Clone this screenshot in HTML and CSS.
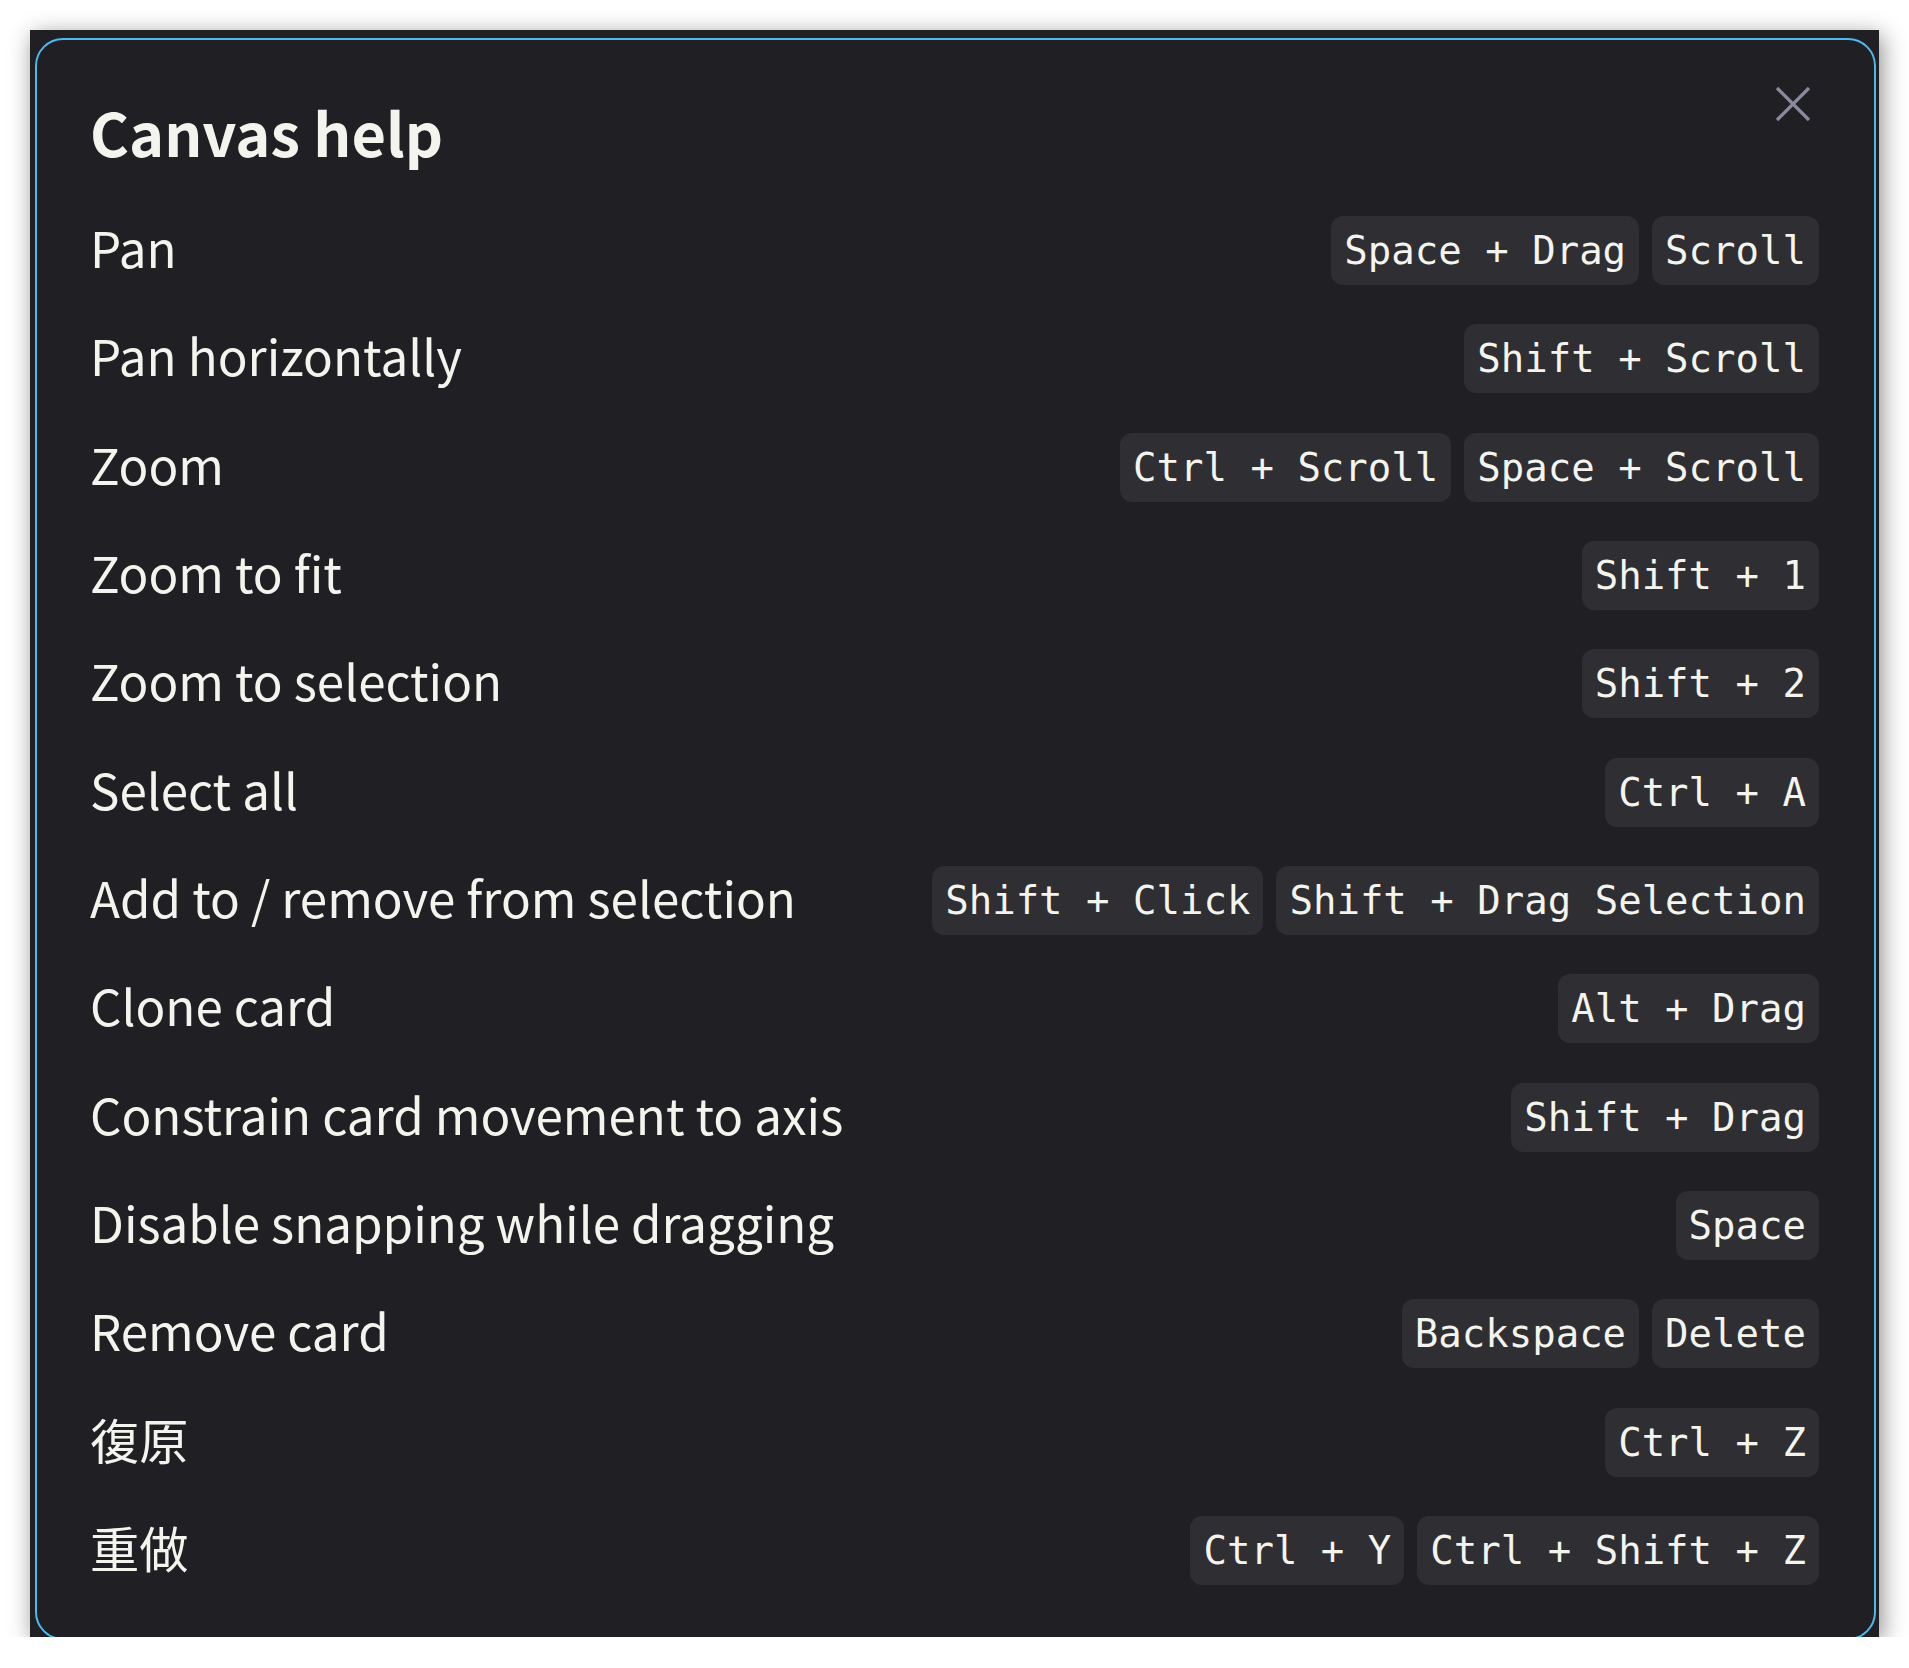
FILE: index.html
```html
<!DOCTYPE html>
<html lang="en">
<head>
<meta charset="utf-8">
<title>Canvas help</title>
<link rel="stylesheet" href="styles.css">
</head>
<body>
<div class="frame">
  <div class="modal">
    <button class="close" aria-label="Close">
      <svg width="36" height="36" viewBox="0 0 36 36"><path d="M2 2L34 34M34 2L2 34" stroke="currentColor" stroke-width="3.2" fill="none"/></svg>
    </button>
    <h2 class="title">Canvas help</h2>
    <div class="list">
      <div class="row"><span class="label">Pan</span><span class="keys"><kbd>Space + Drag</kbd><kbd>Scroll</kbd></span></div>
      <div class="row"><span class="label">Pan horizontally</span><span class="keys"><kbd>Shift + Scroll</kbd></span></div>
      <div class="row"><span class="label">Zoom</span><span class="keys"><kbd>Ctrl + Scroll</kbd><kbd>Space + Scroll</kbd></span></div>
      <div class="row"><span class="label">Zoom to fit</span><span class="keys"><kbd>Shift + 1</kbd></span></div>
      <div class="row"><span class="label">Zoom to selection</span><span class="keys"><kbd>Shift + 2</kbd></span></div>
      <div class="row"><span class="label">Select all</span><span class="keys"><kbd>Ctrl + A</kbd></span></div>
      <div class="row"><span class="label">Add to / remove from selection</span><span class="keys"><kbd>Shift + Click</kbd><kbd>Shift + Drag Selection</kbd></span></div>
      <div class="row"><span class="label">Clone card</span><span class="keys"><kbd>Alt + Drag</kbd></span></div>
      <div class="row"><span class="label">Constrain card movement to axis</span><span class="keys"><kbd>Shift + Drag</kbd></span></div>
      <div class="row"><span class="label">Disable snapping while dragging</span><span class="keys"><kbd>Space</kbd></span></div>
      <div class="row"><span class="label">Remove card</span><span class="keys"><kbd>Backspace</kbd><kbd>Delete</kbd></span></div>
      <div class="row"><span class="label">復原</span><span class="keys"><kbd>Ctrl + Z</kbd></span></div>
      <div class="row"><span class="label">重做</span><span class="keys"><kbd>Ctrl + Y</kbd><kbd>Ctrl + Shift + Z</kbd></span></div>
    </div>
  </div>
</div>
</body>
</html>
```

FILE: styles.css
```css
html, body {
  margin: 0;
  padding: 0;
  background: #ffffff;
}

.frame {
  margin: 30px 0 0 30px;
  width: 1849px;
  height: 1607px;
  background: #1f1f24;
  overflow: hidden;
  box-shadow: 3px 5px 22px rgba(0, 0, 0, 0.45);
  padding: 8px 0 0 5px;
  box-sizing: border-box;
}

.modal {
  position: relative;
  width: 1841px;
  height: 1602px;
  box-sizing: border-box;
  border: 2px solid #4db9ee;
  border-radius: 28px;
  background: #1f1f24;
  padding: 49px 55px 0 53px;
  color: #f4f4ee;
  font-family: "Noto Sans CJK TC", "Noto Sans", sans-serif;
}

.close {
  position: absolute;
  top: 46px;
  right: 63px;
  width: 36px;
  height: 36px;
  padding: 0;
  border: 0;
  background: transparent;
  color: #8a8a9e;
  display: flex;
}

.title {
  margin: 0;
  font-size: 59.5px;
  font-weight: 700;
  line-height: 84px;
}

.list {
  margin-top: 43px;
  display: flex;
  flex-direction: column;
  gap: 39.33px;
}

.row {
  display: flex;
  align-items: center;
  justify-content: space-between;
  height: 69px;
}

.label {
  align-self: flex-start;
  font-size: 49.3px;
  line-height: 62px;
  white-space: nowrap;
}

.keys {
  display: flex;
  gap: 13px;
}

kbd {
  font-family: "DejaVu Sans Mono", monospace;
  font-size: 39px;
  line-height: 47px;
  padding: 11px 13px;
  background: #2e2e33;
  border-radius: 12px;
  white-space: pre;
  color: #f4f4ee;
}
```
